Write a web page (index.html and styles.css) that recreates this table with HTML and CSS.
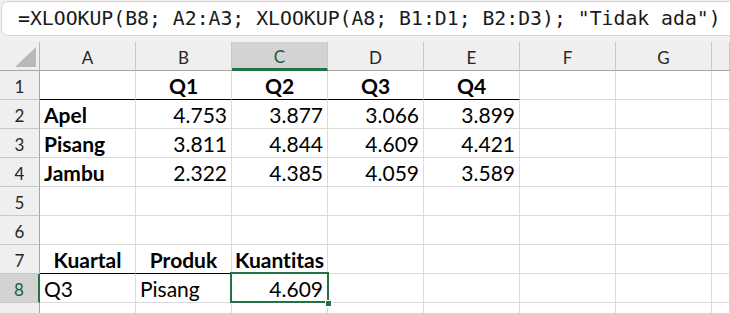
FILE: index.html
```html
<!DOCTYPE html>
<html>
  <head>
    <title>Buku1 - XLOOKUP</title>
    <link rel="stylesheet" href="styles.css">
  </head>
  <body>
    <div class="formula_area">
      <div class="formula_box">=XLOOKUP(B8; A2:A3; XLOOKUP(A8; B1:D1; B2:D3); "Tidak ada")</div>
    </div>

    <div class="sheet">
      <!-- column headers -->
      <div class="corner"><span class="corner_tri"></span></div>
      <div class="col_head">A</div>
      <div class="col_head">B</div>
      <div class="col_head active">C</div>
      <div class="col_head">D</div>
      <div class="col_head">E</div>
      <div class="col_head">F</div>
      <div class="col_head">G</div>
      <div class="col_head"></div>

      <!-- row 1 -->
      <div class="row_head">1</div>
      <div class="cell line"></div>
      <div class="cell line b center">Q1</div>
      <div class="cell line b center">Q2</div>
      <div class="cell line b center">Q3</div>
      <div class="cell line b center">Q4</div>
      <div class="cell"></div>
      <div class="cell"></div>
      <div class="cell"></div>

      <!-- row 2 -->
      <div class="row_head">2</div>
      <div class="cell b">Apel</div>
      <div class="cell num">4.753</div>
      <div class="cell num">3.877</div>
      <div class="cell num">3.066</div>
      <div class="cell num">3.899</div>
      <div class="cell"></div>
      <div class="cell"></div>
      <div class="cell"></div>

      <!-- row 3 -->
      <div class="row_head">3</div>
      <div class="cell b">Pisang</div>
      <div class="cell num">3.811</div>
      <div class="cell num">4.844</div>
      <div class="cell num">4.609</div>
      <div class="cell num">4.421</div>
      <div class="cell"></div>
      <div class="cell"></div>
      <div class="cell"></div>

      <!-- row 4 -->
      <div class="row_head">4</div>
      <div class="cell b">Jambu</div>
      <div class="cell num">2.322</div>
      <div class="cell num">4.385</div>
      <div class="cell num">4.059</div>
      <div class="cell num">3.589</div>
      <div class="cell"></div>
      <div class="cell"></div>
      <div class="cell"></div>

      <!-- row 5 -->
      <div class="row_head">5</div>
      <div class="cell"></div>
      <div class="cell"></div>
      <div class="cell"></div>
      <div class="cell"></div>
      <div class="cell"></div>
      <div class="cell"></div>
      <div class="cell"></div>
      <div class="cell"></div>

      <!-- row 6 -->
      <div class="row_head">6</div>
      <div class="cell"></div>
      <div class="cell"></div>
      <div class="cell"></div>
      <div class="cell"></div>
      <div class="cell"></div>
      <div class="cell"></div>
      <div class="cell"></div>
      <div class="cell"></div>

      <!-- row 7 -->
      <div class="row_head">7</div>
      <div class="cell line b center">Kuartal</div>
      <div class="cell line b center">Produk</div>
      <div class="cell line b center">Kuantitas</div>
      <div class="cell"></div>
      <div class="cell"></div>
      <div class="cell"></div>
      <div class="cell"></div>
      <div class="cell"></div>

      <!-- row 8 -->
      <div class="row_head active">8</div>
      <div class="cell">Q3</div>
      <div class="cell">Pisang</div>
      <div class="cell num selected">4.609<span class="handle"></span></div>
      <div class="cell"></div>
      <div class="cell"></div>
      <div class="cell"></div>
      <div class="cell"></div>
      <div class="cell"></div>

      <!-- row 9 -->
      <div class="row_head"></div>
      <div class="cell"></div>
      <div class="cell"></div>
      <div class="cell"></div>
      <div class="cell"></div>
      <div class="cell"></div>
      <div class="cell"></div>
      <div class="cell"></div>
      <div class="cell"></div>
    </div>
  </body>
</html>
```

FILE: styles.css
```css
html, body { height: 100%; }
body { margin: 0; background: #fff; overflow: hidden; font-family: Lato, "Liberation Sans", sans-serif; font-variant-ligatures: none; color: #000; }

.formula_area { background: #f5f0f0; height: 42px; box-sizing: border-box; padding: 1px 0 0 1px; overflow: hidden; }
.formula_box { background: #fff; border: 1px solid #d4d4d4; border-radius: 7px; height: 35px; width: 800px; box-sizing: border-box; padding-left: 16px; font-family: "DejaVu Sans Mono", monospace; font-size: 19.8px; line-height: 33px; color: #1a1a1a; white-space: nowrap; }

.sheet { display: grid; grid-template-columns: 40px repeat(7, 96px) 1fr; grid-template-rows: 29px; grid-auto-rows: 29px; }

.corner { background: #efefef; border-right: 1px solid #b4b4b4; border-bottom: 1px solid #a6a6a6; position: relative; }
.corner_tri { position: absolute; right: 3px; bottom: 3px; width: 0; height: 0; border-left: 21px solid transparent; border-bottom: 20px solid #b9b9b9; }

.col_head { background: #efefef; border-right: 1px solid #c8c8c8; border-bottom: 1px solid #a6a6a6; display: flex; align-items: center; justify-content: center; font-size: 17px; color: #262626; padding-top: 2px; }
.col_head.active { background: #d3d3d3; color: #185c37; border-bottom: 3px solid #217346; }

.row_head { background: #efefef; border-right: 1px solid #a6a6a6; border-bottom: 1px solid #c8c8c8; display: flex; align-items: center; justify-content: center; font-size: 17px; color: #262626; padding-top: 2px; }
.row_head.active { background: #d3d3d3; color: #185c37; border-right: 2px solid #217346; }

.cell { border-right: 1px solid #dadada; border-bottom: 1px solid #dadada; padding: 0 4px 3px; font-size: 21px; line-height: 1; display: flex; align-items: flex-end; white-space: nowrap; position: relative; }
.cell.b { font-weight: bold; }
.cell.center { justify-content: center; }
.cell.num { justify-content: flex-end; }
.cell.line { border-bottom-color: #000; }

.selected::after { content: ""; position: absolute; left: -2px; top: -2px; right: -2px; bottom: -1px; border: 2px solid #217346; }
.handle { position: absolute; right: -5px; bottom: -5px; width: 5px; height: 5px; background: #217346; border: 1px solid #fff; z-index: 2; }
```
